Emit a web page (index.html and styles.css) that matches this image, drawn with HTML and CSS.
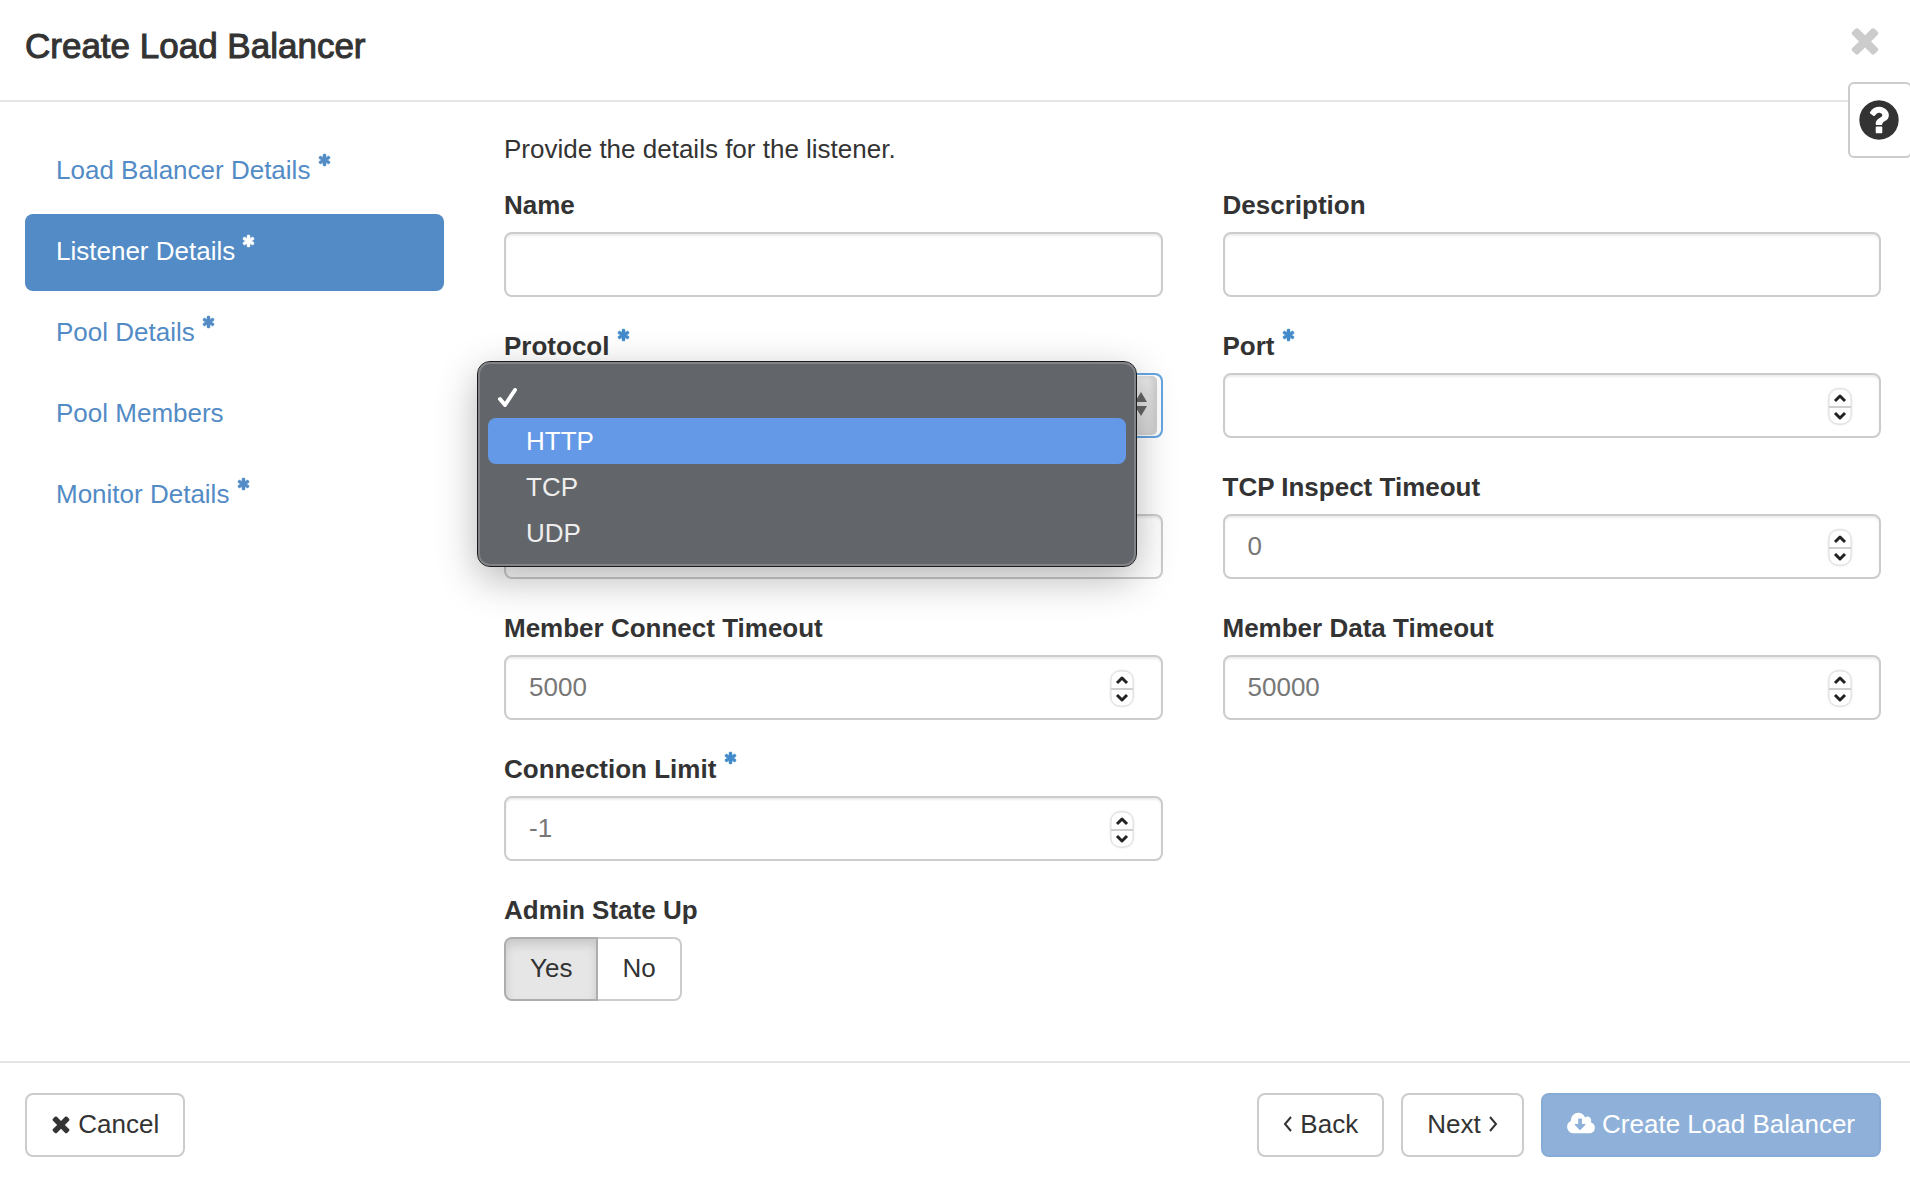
FILE: index.html
```html
<!DOCTYPE html>
<html lang="en">
<head>
  <meta charset="UTF-8">
  <meta name="viewport" content="width=device-width, initial-scale=1.0">
  <title>Create Load Balancer</title>
  <link rel="stylesheet" href="styles.css">
</head>
<body>
  <!-- Shared icons -->
  <svg class="sprite" aria-hidden="true">
    <symbol id="i-times" viewBox="192 0 1408 1792"><path d="M1490 1322q0 40-28 68l-136 136q-28 28-68 28t-68-28l-294-294-294 294q-28 28-68 28t-68-28l-136-136q-28-28-28-68t28-68l294-294-294-294q-28-28-28-68t28-68l136-136q28-28 68-28t68 28l294 294 294-294q28-28 68-28t68 28l136 136q28 28 28 68t-28 68l-294 294 294 294q28 28 28 68z"/></symbol>
    <symbol id="i-asterisk" viewBox="64 0 1664 1792"><path d="M1546 1050q46 26 59.5 77.5t-12.5 97.5l-64 110q-26 46-77.5 59.5t-97.5-12.5l-266-153v307q0 52-38 90t-90 38h-128q-52 0-90-38t-38-90v-307l-266 153q-46 26-97.5 12.5t-77.5-59.5l-64-110q-26-46-12.5-97.5t59.5-77.5l266-154-266-154q-46-26-59.5-77.5t12.5-97.5l64-110q26-46 77.5-59.5t97.5 12.5l266 153v-307q0-52 38-90t90-38h128q52 0 90 38t38 90v307l266-153q46-26 97.5-12.5t77.5 59.5l64 110q26 46 12.5 97.5t-59.5 77.5l-266 154z"/></symbol>
    <symbol id="i-spinner" viewBox="0 0 24 37">
      <rect x="1" y="1" width="22" height="35" rx="9" fill="#fff" stroke="#dedede"/>
      <path d="M1 19h22" stroke="#d0d0d0" stroke-width="2"/>
      <path d="M7 13l5-5 5 5M7 25l5 5 5-5" fill="none" stroke="#222" stroke-width="3" stroke-linejoin="round"/>
    </symbol>
  </svg>

  <form class="wizard">
    <header class="wizard-header">
      <h1>Create Load Balancer</h1>
      <button type="button" class="close" aria-label="Close"><svg><use href="#i-times"/></svg></button>
    </header>

    <button type="button" class="help" aria-label="Help">
      <svg viewBox="0 0 1792 1792"><path d="M1024 1376v-192q0-14-9-23t-23-9h-192q-14 0-23 9t-9 23v192q0 14 9 23t23 9h192q14 0 23-9t9-23zm256-672q0-88-55.5-163t-138.5-116-170-41q-243 0-371 213-15 24 8 42l132 100q7 6 19 6 16 0 25-12 53-68 86-92 34-24 86-24 48 0 85.5 26t37.5 59q0 38-20 61t-68 45q-63 28-115.5 86.5t-52.5 125.5v36q0 14 9 23t23 9h192q14 0 23-9t9-23q0-19 21.5-49.5t54.5-49.5q32-18 49-28.5t46-35 44.5-48 28-60.5 12.5-81zm384 192q0 209-103 385.5t-279.5 279.5-385.5 103-385.5-103-279.5-279.5-103-385.5 103-385.5 279.5-279.5 385.5-103 385.5 103 279.5 279.5 103 385.5z"/></svg>
    </button>

    <div class="wizard-body">
      <nav class="steps">
        <a href="#">Load Balancer Details <svg class="required"><use href="#i-asterisk"/></svg></a>
        <a href="#" class="active">Listener Details <svg class="required"><use href="#i-asterisk"/></svg></a>
        <a href="#">Pool Details <svg class="required"><use href="#i-asterisk"/></svg></a>
        <a href="#">Pool Members</a>
        <a href="#">Monitor Details <svg class="required"><use href="#i-asterisk"/></svg></a>
      </nav>

      <main class="content">
        <p>Provide the details for the listener.</p>

        <div class="fields">
          <div class="field">
            <label for="name">Name</label>
            <div class="control"><input type="text" id="name"></div>
          </div>
          <div class="field">
            <label for="description">Description</label>
            <div class="control"><input type="text" id="description"></div>
          </div>

          <div class="field">
            <label for="protocol">Protocol <svg class="required"><use href="#i-asterisk"/></svg></label>
            <div class="control control-select">
              <select id="protocol">
                <option></option>
                <option>HTTP</option>
                <option>TCP</option>
                <option>UDP</option>
              </select>
              <svg class="arrows" viewBox="0 0 12 24"><path d="M6 0l6 10H0zM0 14h12L6 24z"/></svg>
              <ul class="menu">
                <li><svg class="check" viewBox="0 0 22 20"><path d="M4 12l5 6L19 3"/></svg></li>
                <li class="highlight">HTTP</li>
                <li>TCP</li>
                <li>UDP</li>
              </ul>
            </div>
          </div>
          <div class="field">
            <label for="port">Port <svg class="required"><use href="#i-asterisk"/></svg></label>
            <div class="control"><input type="number" id="port"><svg class="spinner"><use href="#i-spinner"/></svg></div>
          </div>

          <div class="field">
            <div class="control"><input type="number" aria-label="Client Data Timeout"></div>
          </div>
          <div class="field">
            <label for="inspect">TCP Inspect Timeout</label>
            <div class="control"><input type="number" id="inspect" value="0"><svg class="spinner"><use href="#i-spinner"/></svg></div>
          </div>

          <div class="field">
            <label for="connect">Member Connect Timeout</label>
            <div class="control"><input type="number" id="connect" value="5000"><svg class="spinner"><use href="#i-spinner"/></svg></div>
          </div>
          <div class="field">
            <label for="data">Member Data Timeout</label>
            <div class="control"><input type="number" id="data" value="50000"><svg class="spinner"><use href="#i-spinner"/></svg></div>
          </div>

          <div class="field">
            <label for="limit">Connection Limit <svg class="required"><use href="#i-asterisk"/></svg></label>
            <div class="control"><input type="number" id="limit" value="-1"><svg class="spinner"><use href="#i-spinner"/></svg></div>
          </div>

          <fieldset class="field field-left">
            <legend>Admin State Up</legend>
            <div class="btn-group">
              <label><input type="radio" name="admin" checked><span>Yes</span></label>
              <label><input type="radio" name="admin"><span>No</span></label>
            </div>
          </fieldset>
        </div>
      </main>
    </div>

    <footer class="wizard-footer">
      <button type="button" class="btn btn-cancel"><svg class="icon-times"><use href="#i-times"/></svg> Cancel</button>
      <button type="button" class="btn"><svg class="icon-angle" viewBox="0 0 10 18"><path d="M8 2L2 9l6 7"/></svg> Back</button>
      <button type="button" class="btn">Next <svg class="icon-angle" viewBox="0 0 10 18"><path d="M2 2l6 7-6 7"/></svg></button>
      <button type="submit" class="btn btn-primary" disabled><svg class="icon-cloud" viewBox="0 0 1920 1792"><path d="M1280 928q0-14-9-23t-23-9h-224v-352q0-13-9.5-22.5t-22.5-9.5h-192q-13 0-22.5 9.5t-9.5 22.5v352h-224q-13 0-22.5 9.5t-9.5 22.5q0 14 9 23l352 352q9 9 23 9t23-9l351-351q10-12 10-24zm640 224q0 159-112.5 271.5t-271.5 112.5h-1088q-185 0-316.5-131.5t-131.5-316.5q0-130 70-240t188-165q-2-30-2-43 0-212 150-362t362-150q156 0 285.5 87t188.5 231q71-62 166-62 106 0 181 75t75 181q0 76-41 138 130 31 213.5 135.5t83.5 238.5z"/></svg> Create Load Balancer</button>
    </footer>
  </form>
</body>
</html>
```
FILE: styles.css
```css
* {
  box-sizing: border-box;
}
body {
  margin: 0;
  font-family: "Helvetica Neue", "Liberation Sans", Arial, sans-serif;
  font-size: 26px;
  line-height: 37px;
  color: #333;
  background: #fff;
}
button, input, select {
  font: inherit;
  color: inherit;
}
svg {
  fill: currentColor;
}
.sprite {
  position: absolute;
  width: 0;
  height: 0;
}
.wizard {
  position: relative;
  min-height: 100vh;
  display: flex;
  flex-direction: column;
}

/* Header */
.wizard-header {
  display: flex;
  align-items: flex-start;
  justify-content: space-between;
  padding: 26px 29px 34px 25px;
  border-bottom: 2px solid #e5e5e5;
}
h1 {
  margin: 0;
  font-size: 35px;
  font-weight: 400;
  line-height: 40px;
  -webkit-text-stroke: 1px #333;
}
.close {
  display: flex;
  padding: 0;
  border: 0;
  background: none;
  color: #ccc;
}
.close svg {
  width: 32px;
  height: 40px;
  margin-top: -6px;
}
.help {
  position: absolute;
  top: 82px;
  right: -2px;
  display: flex;
  padding: 13px 8px 13px 6px;
  border: 2px solid #ccc;
  border-radius: 6px;
  background: #fff;
}
.help svg {
  width: 46px;
  height: 46px;
}

/* Steps */
.wizard-body {
  flex: 1;
  display: grid;
  grid-template-columns: 419fr 1377fr;
  gap: 60px;
  padding: 29px 29px 29px 25px;
}
.steps {
  display: flex;
  flex-direction: column;
  gap: 4px;
  padding-top: 2px;
}
.steps a {
  padding: 19px 31px 21px;
  border-radius: 8px;
  color: #528bc5;
  text-decoration: none;
}
.steps a.active {
  background: #528bc5;
  color: #fff;
}
.required {
  width: 13px;
  height: 14px;
  margin-bottom: 13px;
  vertical-align: baseline;
  color: #428bca;
  stroke: currentColor;
  stroke-width: 60px;
}
.steps .required {
  margin-bottom: 12px;
  color: inherit;
}

/* Form */
.content p {
  margin: 0 0 19px;
}
.fields {
  display: grid;
  grid-template-columns: 1fr 1fr;
  gap: 31px 60px;
}
.field {
  display: flex;
  flex-direction: column;
  justify-content: flex-end;
  min-width: 0;
  margin: 0;
  padding: 0;
  border: 0;
}
.field-left {
  grid-column: 1;
}
.field > label, legend {
  height: 37px;
  margin-bottom: 8px;
  padding: 0;
  font-weight: bold;
}
.control {
  position: relative;
  display: flex;
  align-items: center;
  height: 65px;
  padding: 0 27px 0 23px;
  border: 2px solid #ccc;
  border-radius: 8px;
  background: #fff;
  box-shadow: inset 0 2px 2px rgba(0,0,0,0.075);
}
.control input, .control select {
  flex: 1;
  min-width: 0;
  padding: 0;
  border: 0;
  outline: 0;
  background: none;
  color: #777;
  appearance: none;
}
.control input::-webkit-inner-spin-button {
  display: none;
}
.spinner {
  width: 24px;
  height: 37px;
  margin-top: 2px;
  filter: drop-shadow(0 0 1px rgba(0,0,0,0.15));
}
.control-select {
  padding: 0 14px;
  border-color: #66a5e0;
  background: linear-gradient(#ececec, #dadada);
  box-shadow: inset -3px 0 0 1px #fff, inset -8px 0 6px #ccc;
}
.arrows {
  width: 12px;
  height: 24px;
  margin-top: -4px;
  color: #666;
}

/* Open protocol list */
.menu {
  position: absolute;
  z-index: 2;
  top: -13px;
  left: -28px;
  width: 658px;
  margin: 0;
  padding: 8px;
  list-style: none;
  color: #eee;
  background: #626569;
  border: 2px solid #818387;
  border-radius: 12px;
  outline: 1px solid #1b1b1b;
  box-shadow: 0 12px 40px rgba(0,0,0,0.3);
}
.menu li {
  display: flex;
  align-items: center;
  height: 46px;
  padding: 0 38px;
  border-radius: 8px;
}
.menu li:first-child {
  padding: 3px 8px 0;
}
.menu .highlight {
  background: #6499e7;
  color: #fff;
}
.check {
  width: 22px;
  height: 20px;
  fill: none;
  stroke: #fff;
  stroke-width: 4;
  stroke-linecap: round;
  stroke-linejoin: round;
}

/* Yes / No */
.btn-group {
  display: flex;
}
.btn-group input {
  position: absolute;
  opacity: 0;
}
.btn-group span {
  display: block;
  height: 64px;
  padding: 11px 24px;
  border: 2px solid #ccc;
  border-left: 0;
  border-radius: 0 8px 8px 0;
}
.btn-group label:first-child span {
  border-left: 2px solid #ccc;
  border-radius: 8px 0 0 8px;
}
.btn-group input:checked + span {
  border-color: #adadad;
  background: #e6e6e6;
  box-shadow: inset 0 6px 10px rgba(0,0,0,0.125);
}

/* Footer */
.wizard-footer {
  display: flex;
  gap: 17px;
  padding: 30px 29px 27px 25px;
  border-top: 2px solid #e5e5e5;
}
.btn {
  height: 64px;
  padding: 0 24px 2px;
  border: 2px solid #ccc;
  border-radius: 8px;
  background: #fff;
  white-space: nowrap;
}
.btn-cancel {
  margin-right: auto;
}
.btn-primary {
  border-color: #86abd6;
  background: #8fb1d9;
  color: #fff;
}
.icon-times {
  width: 20px;
  height: 26px;
  vertical-align: -4px;
}
.icon-angle {
  width: 10px;
  height: 18px;
  fill: none;
  stroke: currentColor;
  stroke-width: 2;
}
.icon-cloud {
  width: 28px;
  height: 26px;
  vertical-align: -4px;
}
```
